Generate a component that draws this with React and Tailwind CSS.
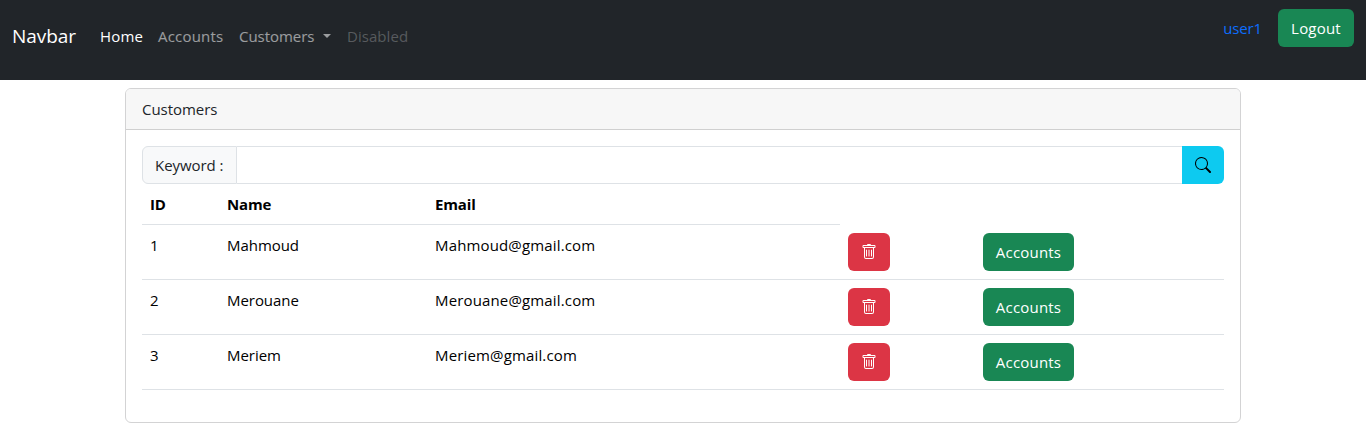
import React from "react";
import { BsSearch, BsTrash } from "react-icons/bs";

const customers = [
  { id: 1, name: "Mahmoud", email: "Mahmoud@gmail.com" },
  { id: 2, name: "Merouane", email: "Merouane@gmail.com" },
  { id: 3, name: "Meriem", email: "Meriem@gmail.com" },
];

const green =
  "flex h-[38px] items-center justify-center rounded-md bg-[#198754] leading-6 tracking-[0.2px] text-white whitespace-nowrap";

const cell = "border-b border-[#dee2e6] p-2";

function Navbar() {
  return (
    <nav className="flex h-20 items-start justify-between bg-[#212529] px-3">
      <div className="flex items-center pt-[21px]">
        <a className="mr-6 w-[64px] whitespace-nowrap text-[19px] leading-[30px] tracking-[-0.05px] text-white">Navbar</a>
        <ul className="flex leading-6 whitespace-nowrap">
          <li className="w-[58px] tracking-[0.2px] text-white">Home</li>
          <li className="w-[81px] tracking-[0.2px] text-white/55">Accounts</li>
          <li className="flex w-[108px] items-center tracking-[-0.05px] text-white/55">
            Customers
            <span className="ml-[9px] border-x-[4.8px] border-t-[4.8px] border-x-transparent border-t-white/55" />
          </li>
          <li className="tracking-[0.05px] text-white/25">Disabled</li>
        </ul>
      </div>
      <div className="flex items-center gap-4 pt-[9px]">
        <span className="tracking-[-0.15px] text-[#0d6efd]">user1</span>
        <button className={green + " w-[76px]"}>Logout</button>
      </div>
    </nav>
  );
}

export default function App() {
  return (
    <div className="h-[434px] overflow-hidden bg-white font-['Open_Sans',sans-serif] text-[15px] tracking-[-0.05px] text-[#212529]">
      <Navbar />
      <main className="mx-auto mt-2 h-[335px] w-[1116px] rounded-md border border-[#d3d3d4]">
        <div className="h-[41px] rounded-t-[5px] border-b border-[#d0d0d0] bg-[#f7f7f7] px-4 py-2 leading-6">Customers</div>
        <div className="p-4">
          <div className="flex h-[38px]">
            <label className="w-[95px] rounded-l-md border border-[#dee2e6] bg-[#f8f9fa] pl-3 leading-9 whitespace-nowrap">Keyword :</label>
            <input className="min-w-0 flex-1 border-y border-[#dee2e6] outline-none" />
            <button className="flex w-[42px] items-center justify-center rounded-r-md bg-[#0dcaf0] text-black">
              <BsSearch size={16} />
            </button>
          </div>
          <table className="w-full table-fixed border-separate border-spacing-0 text-left leading-6 text-black">
            <colgroup>
              <col className="w-[77px]" />
              <col className="w-[208px]" />
              <col className="w-[413px]" />
              <col className="w-[135px]" />
              <col />
            </colgroup>
            <thead>
              <tr className="h-[41px] align-top tracking-[-0.15px]">
                <th className={cell + " font-bold"}>ID</th>
                <th className={cell + " font-bold"}>Name</th>
                <th className={cell + " font-bold"}>Email</th>
              </tr>
            </thead>
            <tbody>
              {customers.map((c) => (
                <tr key={c.id} className="h-[55px] align-top">
                  <td className={cell}>{c.id}</td>
                  <td className={cell}>{c.name}</td>
                  <td className={cell + " tracking-[0.15px]"}>{c.email}</td>
                  <td className={cell}>
                    <button className="flex h-[38px] w-[42px] items-center justify-center rounded-md bg-[#dc3545] text-white">
                      <BsTrash size={16} />
                    </button>
                  </td>
                  <td className={cell}>
                    <button className={green + " w-[91px]"}>Accounts</button>
                  </td>
                </tr>
              ))}
            </tbody>
          </table>
        </div>
      </main>
    </div>
  );
}
